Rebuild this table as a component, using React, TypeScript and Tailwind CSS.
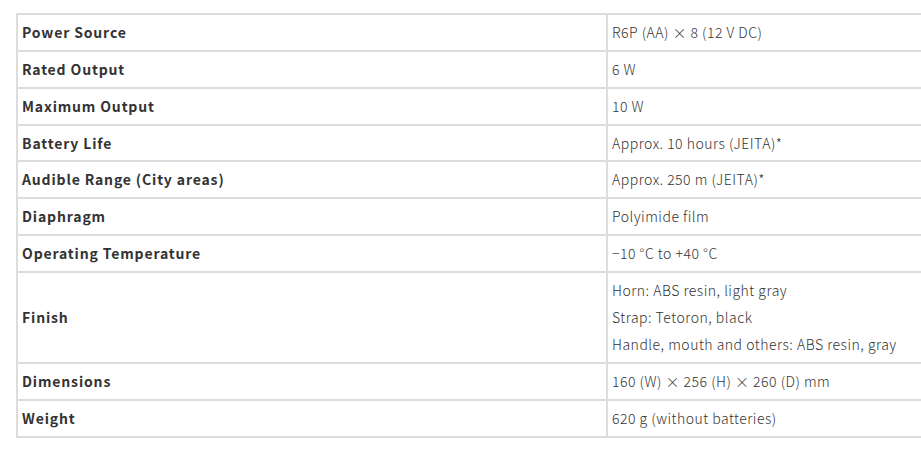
const specs: { label: string; values: string[] }[] = [
    { label: 'Power Source', values: ['R6P (AA) × 8 (12 V DC)'] },
    { label: 'Rated Output', values: ['6 W'] },
    { label: 'Maximum Output', values: ['10 W'] },
    { label: 'Battery Life', values: ['Approx. 10 hours (JEITA)*'] },
    { label: 'Audible Range (City areas)', values: ['Approx. 250 m (JEITA)*'] },
    { label: 'Diaphragm', values: ['Polyimide film'] },
    { label: 'Operating Temperature', values: ['−10 °C to +40 °C'] },
    {
        label: 'Finish',
        values: ['Horn: ABS resin, light gray', 'Strap: Tetoron, black', 'Handle, mouth and others: ABS resin, gray'],
    },
    { label: 'Dimensions', values: ['160 (W) × 256 (H) × 260 (D) mm'] },
    { label: 'Weight', values: ['620 g (without batteries)'] },
];

export default function App() {
    return (
        <div className="bg-white min-h-[454px] w-[921px] overflow-hidden pt-[13px] pl-4 text-sm text-[#333] font-['Noto_Sans_CJK_JP','Liberation_Sans',sans-serif]">
            <table className="w-[930px] border-collapse border-2 border-[#ddd]">
                <tbody>
                    {specs.map((row) => (
                        <tr key={row.label} className="border-b-2 border-[#ddd]">
                            <th className="w-[590px] border-r-2 border-[#ddd] px-1 py-[8px] text-left align-middle font-bold tracking-[0.85px] leading-[18.85px]">
                                {row.label}
                            </th>
                            <td className="px-1 py-[8px] align-middle font-light tracking-[0.5px] leading-[18.85px]">
                                {row.values.map((v, i) => (
                                    <p key={i} className={i > 0 ? 'mt-[8.2px]' : ''}>
                                        {v}
                                    </p>
                                ))}
                            </td>
                        </tr>
                    ))}
                </tbody>
            </table>
        </div>
    );
}
